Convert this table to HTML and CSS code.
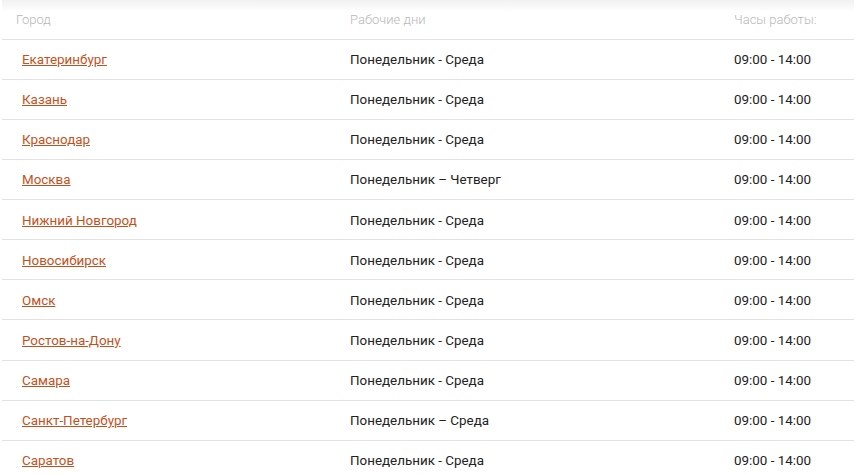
FILE: index.html
```html
<!DOCTYPE html>
<html lang="ru">
<head>
<meta charset="utf-8">
<link rel="stylesheet" href="styles.css">
</head>
<body>
<div class="wrap">
  <div class="row head">
    <div class="c1">Город</div>
    <div class="c2">Рабочие дни</div>
    <div class="c3">Часы работы:</div>
  </div>
  <div class="row"><div class="c1"><a href="#">Екатеринбург</a></div><div class="c2">Понедельник - Среда</div><div class="c3">09:00 - 14:00</div></div>
  <div class="row"><div class="c1"><a href="#">Казань</a></div><div class="c2">Понедельник - Среда</div><div class="c3">09:00 - 14:00</div></div>
  <div class="row"><div class="c1"><a href="#">Краснодар</a></div><div class="c2">Понедельник - Среда</div><div class="c3">09:00 - 14:00</div></div>
  <div class="row"><div class="c1"><a href="#">Москва</a></div><div class="c2">Понедельник – Четверг</div><div class="c3">09:00 - 14:00</div></div>
  <div class="row"><div class="c1"><a href="#">Нижний Новгород</a></div><div class="c2">Понедельник - Среда</div><div class="c3">09:00 - 14:00</div></div>
  <div class="row"><div class="c1"><a href="#">Новосибирск</a></div><div class="c2">Понедельник - Среда</div><div class="c3">09:00 - 14:00</div></div>
  <div class="row"><div class="c1"><a href="#">Омск</a></div><div class="c2">Понедельник - Среда</div><div class="c3">09:00 - 14:00</div></div>
  <div class="row"><div class="c1"><a href="#">Ростов-на-Дону</a></div><div class="c2">Понедельник - Среда</div><div class="c3">09:00 - 14:00</div></div>
  <div class="row"><div class="c1"><a href="#">Самара</a></div><div class="c2">Понедельник - Среда</div><div class="c3">09:00 - 14:00</div></div>
  <div class="row"><div class="c1"><a href="#">Санкт-Петербург</a></div><div class="c2">Понедельник – Среда</div><div class="c3">09:00 - 14:00</div></div>
  <div class="row"><div class="c1"><a href="#">Саратов</a></div><div class="c2">Понедельник - Среда</div><div class="c3">09:00 - 14:00</div></div>
</div>
</body>
</html>
```
FILE: styles.css
```css
html, body {
  margin: 0;
  padding: 0;
  background: #fff;
}
body {
  font-family: Roboto, "Noto Sans", sans-serif;
  font-size: 13.4px;
  color: #222;
}
.wrap {
  margin: 0 2px;
  background: linear-gradient(#f1f1f1, #fff 12px);
}
.row {
  display: grid;
  grid-template-columns: 348px 384px 1fr;
  height: 40.14px;
  align-items: center;
  border-bottom: 1px solid #e2e2e2;
  box-sizing: border-box;
  padding-top: 1px;
}
.row .c1 {
  padding-left: 20px;
}
.head {
  color: #b8b8b8;
  font-weight: 300;
  font-size: 13px;
  height: 39.5px;
  padding-top: 0;
}
.head .c1 {
  padding-left: 14px;
}
a {
  color: #c2521c;
  text-decoration: underline;
}
```
